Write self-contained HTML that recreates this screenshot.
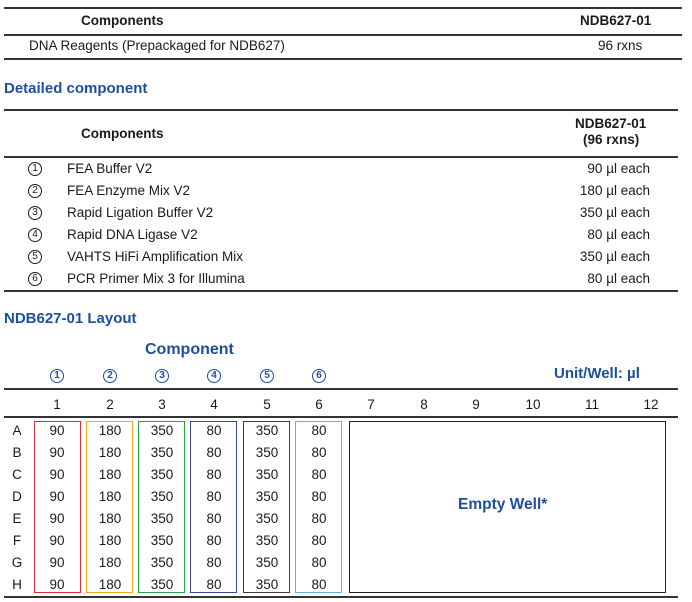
<!DOCTYPE html>
<html><head><meta charset="utf-8"><style>
body{margin:0;width:692px;height:602px;background:#fff;position:relative;overflow:hidden;font-family:"Liberation Sans",Arial,sans-serif;color:#1a1a1a;font-size:13.5px}
.a{position:absolute;white-space:nowrap;line-height:16px}
.hl{position:absolute;height:1.5px;background:#333}
.b{font-weight:bold}
.blue{color:#1f4e9c;font-weight:bold}
.r{text-align:right}
.c{text-align:center;transform:translateX(-50%)}
.ci{position:absolute;width:12px;height:12px;border:1.2px solid currentColor;border-radius:50%;font-size:10px;line-height:12px;text-align:center}
.box{position:absolute;top:421px;height:170px;width:45px;border:1.3px solid}
</style></head><body>
<div class="hl" style="left:4px;width:678px;top:7px"></div>
<div class="a b" style="left:81px;top:13px">Components</div>
<div class="a b" style="left:580px;top:13px">NDB627-01</div>
<div class="hl" style="left:4px;width:678px;top:34px"></div>
<div class="a" style="left:29px;top:38px">DNA Reagents (Prepackaged for NDB627)</div>
<div class="a" style="left:598px;top:38px">96 rxns</div>
<div class="hl" style="left:4px;width:678px;top:58px"></div>

<div class="a blue" style="left:4px;top:81px;font-size:15px">Detailed component</div>
<div class="hl" style="left:4px;width:674px;top:109px"></div>
<div class="a b" style="left:81px;top:126px">Components</div>
<div class="a b" style="left:575px;top:116px">NDB627-01</div>
<div class="a b" style="left:583px;top:132px">(96 rxns)</div>
<div class="hl" style="left:4px;width:674px;top:156px"></div>
<div class="ci" style="left:28px;top:162px">1</div><div class="a" style="left:67px;top:161px">FEA Buffer V2</div><div class="a r" style="right:42px;top:161px">90 µl each</div>
<div class="ci" style="left:28px;top:184px">2</div><div class="a" style="left:67px;top:183px">FEA Enzyme Mix V2</div><div class="a r" style="right:42px;top:183px">180 µl each</div>
<div class="ci" style="left:28px;top:206px">3</div><div class="a" style="left:67px;top:205px">Rapid Ligation Buffer V2</div><div class="a r" style="right:42px;top:205px">350 µl each</div>
<div class="ci" style="left:28px;top:228px">4</div><div class="a" style="left:67px;top:227px">Rapid DNA Ligase V2</div><div class="a r" style="right:42px;top:227px">80 µl each</div>
<div class="ci" style="left:28px;top:250px">5</div><div class="a" style="left:67px;top:249px">VAHTS HiFi Amplification Mix</div><div class="a r" style="right:42px;top:249px">350 µl each</div>
<div class="ci" style="left:28px;top:272px">6</div><div class="a" style="left:67px;top:271px">PCR Primer Mix 3 for Illumina</div><div class="a r" style="right:42px;top:271px">80 µl each</div>
<div class="hl" style="left:4px;width:674px;top:290px"></div>

<div class="a blue" style="left:4px;top:311px;font-size:15px">NDB627-01 Layout</div>
<div class="a blue" style="left:145px;top:342px;font-size:16px">Component</div>
<div class="a blue" style="left:554px;top:366px;font-size:15px">Unit/Well: µl</div>
<div class="ci b" style="left:50px;top:369px;color:#1f4e9c;border-width:1.6px">1</div>
<div class="ci b" style="left:103px;top:369px;color:#1f4e9c;border-width:1.6px">2</div>
<div class="ci b" style="left:155px;top:369px;color:#1f4e9c;border-width:1.6px">3</div>
<div class="ci b" style="left:207px;top:369px;color:#1f4e9c;border-width:1.6px">4</div>
<div class="ci b" style="left:260px;top:369px;color:#1f4e9c;border-width:1.6px">5</div>
<div class="ci b" style="left:312px;top:369px;color:#1f4e9c;border-width:1.6px">6</div>
<div class="hl" style="left:4px;width:674px;top:388px"></div>
<div class="a c" style="left:57px;top:397px">1</div>
<div class="a c" style="left:110px;top:397px">2</div>
<div class="a c" style="left:162px;top:397px">3</div>
<div class="a c" style="left:214px;top:397px">4</div>
<div class="a c" style="left:267px;top:397px">5</div>
<div class="a c" style="left:319px;top:397px">6</div>
<div class="a c" style="left:371px;top:397px">7</div>
<div class="a c" style="left:424px;top:397px">8</div>
<div class="a c" style="left:476px;top:397px">9</div>
<div class="a c" style="left:533px;top:397px">10</div>
<div class="a c" style="left:592px;top:397px">11</div>
<div class="a c" style="left:651px;top:397px">12</div>
<div class="hl" style="left:4px;width:674px;top:416px"></div>

<div class="box" style="left:34px;border-color:#d9303c"></div>
<div class="box" style="left:86px;border-color:#f5a623"></div>
<div class="box" style="left:138px;border-color:#2aa44a"></div>
<div class="box" style="left:190px;border-color:#3a4a9a"></div>
<div class="box" style="left:243px;border-color:#4a3a30"></div>
<div class="box" style="left:295px;border-color:#5ab4e6"></div>
<div class="box" style="left:349px;width:315px;border-color:#222"></div>
<div class="a blue" style="left:458px;top:497px;font-size:15.5px">Empty Well*</div>
<div class="hl" style="left:4px;width:674px;top:596px"></div>

<div id="rows"></div>
<script>
var L="ABCDEFGH",v=["90","180","350","80","350","80"],x=[57,110,162,214,267,319],h="";
for(var i=0;i<8;i++){var t=423+i*22;h+='<div class="a c" style="left:17px;top:'+t+'px">'+L[i]+'</div>';
for(var j=0;j<6;j++)h+='<div class="a c" style="left:'+x[j]+'px;top:'+t+'px">'+v[j]+'</div>';}
document.getElementById("rows").innerHTML=h;
</script>
</body></html>
